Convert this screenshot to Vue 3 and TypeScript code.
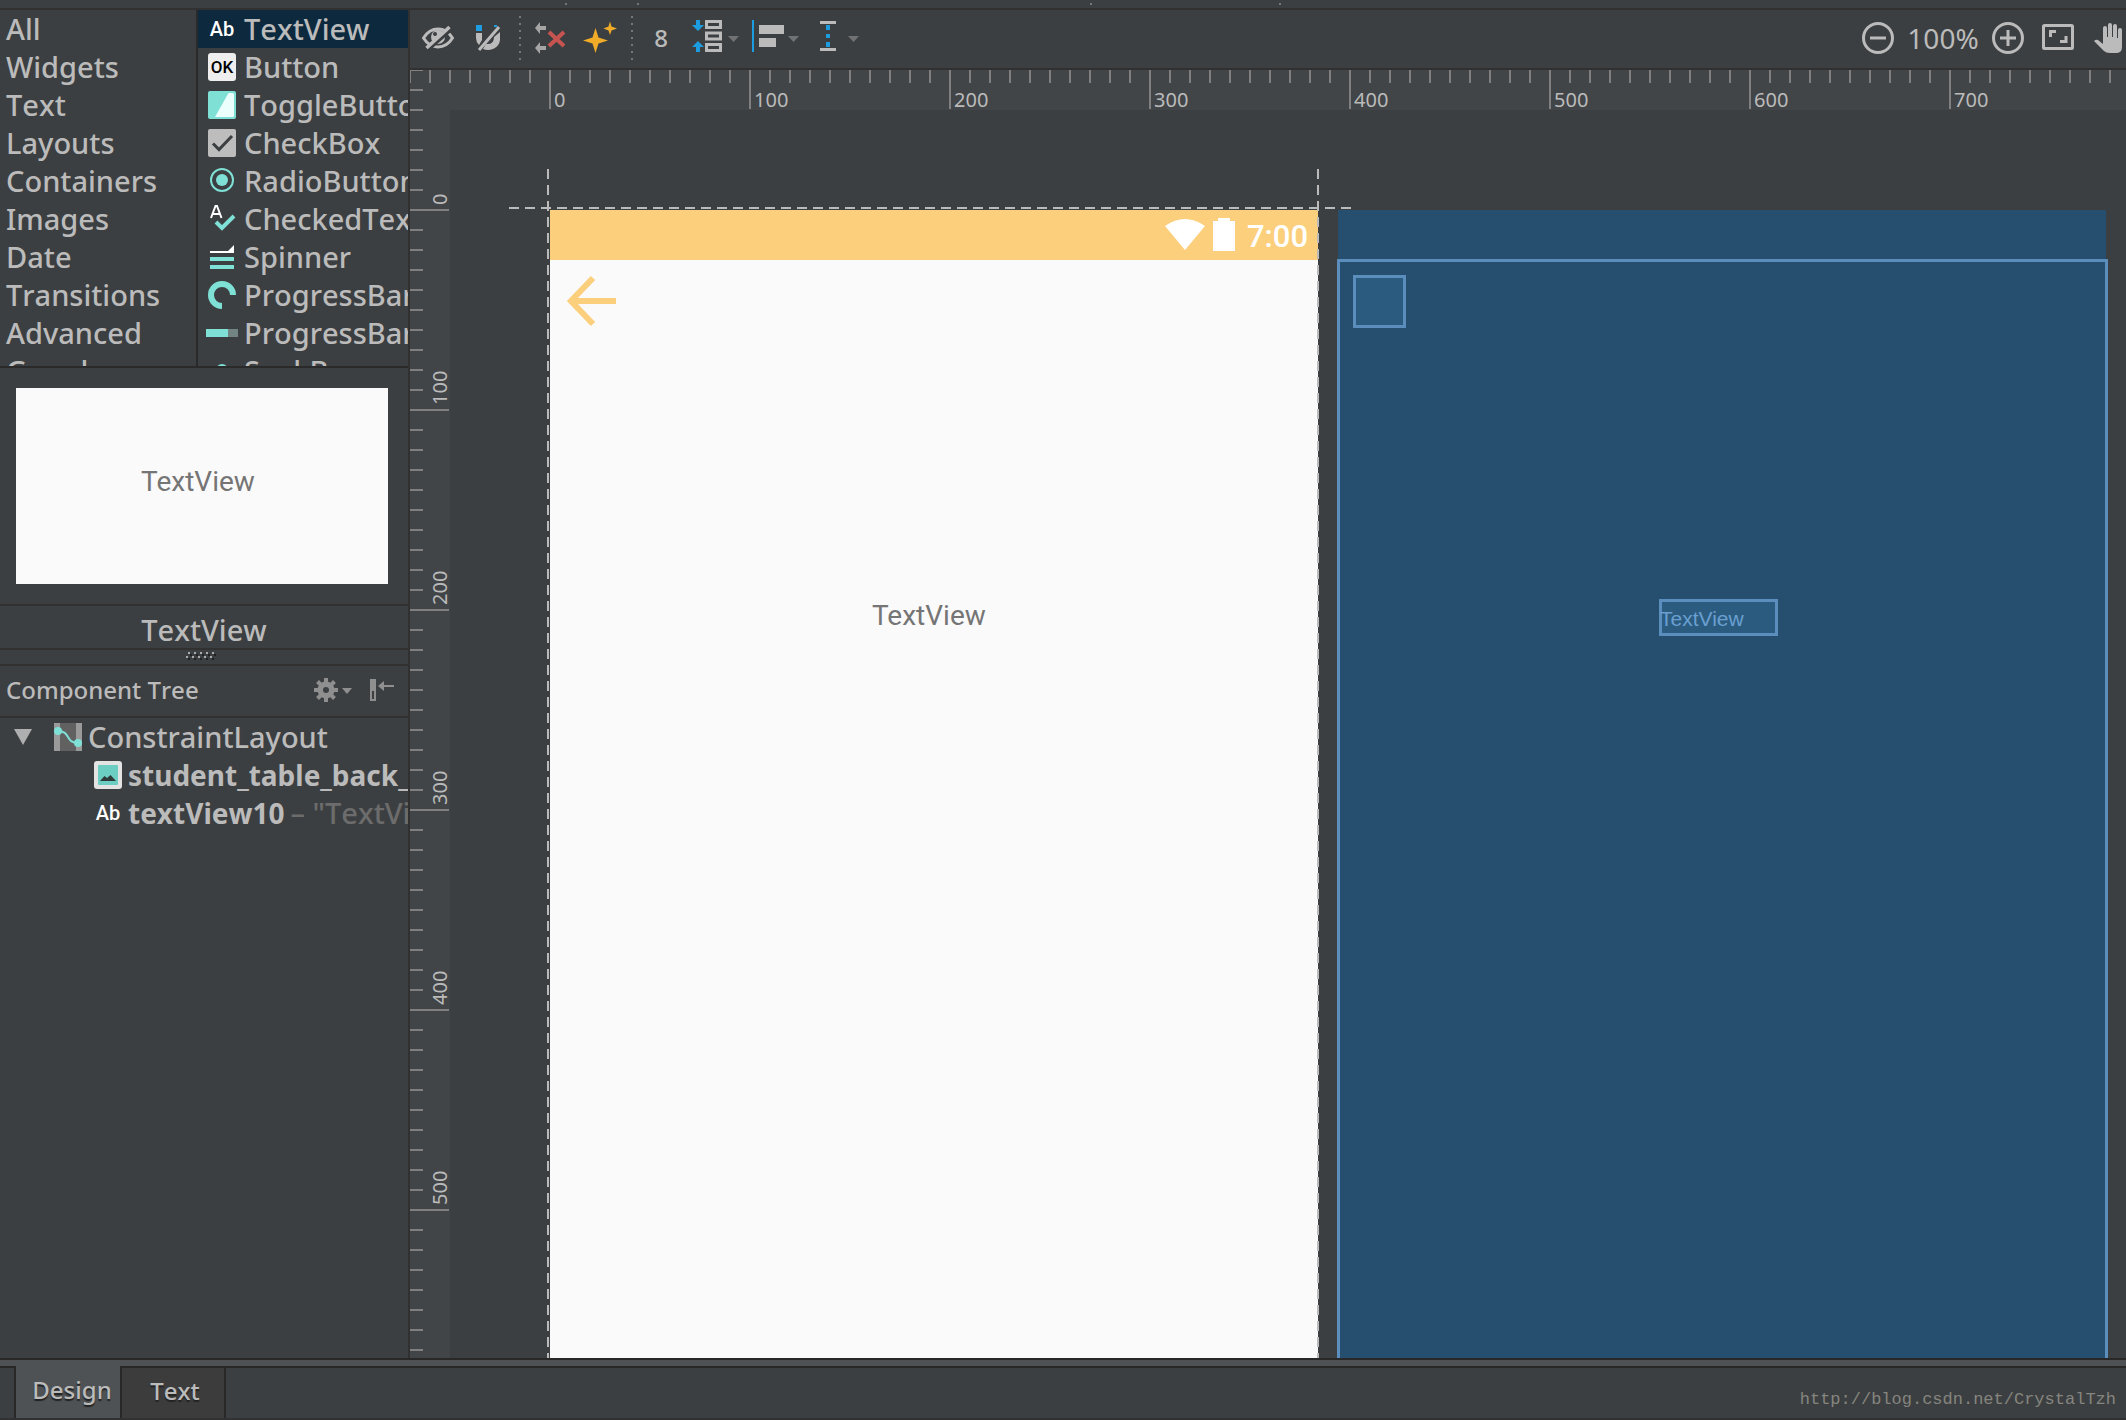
<script setup lang="ts">
import { ref } from 'vue'

const categories: string[] = [
  'All', 'Widgets', 'Text', 'Layouts', 'Containers', 'Images', 'Date', 'Transitions', 'Advanced', 'Google',
]

interface PaletteItem {
  icon: string
  label: string
}

const items: PaletteItem[] = [
  { icon: 'ab', label: 'TextView' },
  { icon: 'ok', label: 'Button' },
  { icon: 'toggle', label: 'ToggleButton' },
  { icon: 'check', label: 'CheckBox' },
  { icon: 'radio', label: 'RadioButton' },
  { icon: 'checked', label: 'CheckedTextView' },
  { icon: 'spinner', label: 'Spinner' },
  { icon: 'progress', label: 'ProgressBar' },
  { icon: 'bar', label: 'ProgressBar (Horizontal)' },
  { icon: 'seek', label: 'SeekBar' },
]

const selected = ref(0)
const tab = ref('Design')
const columns: number[] = [0, 100, 200, 300, 400, 500, 600, 700]
const rows: number[] = [0, 100, 200, 300, 400, 500]
</script>

<template>
  <div class="ide">
    <div class="strip"><i class="d1"></i><i class="d2"></i><i class="d3"></i><i class="d4"></i></div>

    <div class="body">
      <aside class="side">
        <div class="palette">
          <nav class="cats">
            <button v-for="c in categories" :key="c" type="button" class="row">{{ c }}</button>
          </nav>
          <div class="items">
            <button
              v-for="(it, i) in items" :key="it.label" type="button"
              class="row item" :class="{ sel: i === selected }" @click="selected = i"
            >
              <span v-if="it.icon === 'ab'" class="glyph ab">Ab</span>
              <span v-else-if="it.icon === 'ok'" class="glyph ok">OK</span>
              <svg v-else class="glyph" viewBox="0 0 28 28">
                <template v-if="it.icon === 'toggle'">
                  <rect width="28" height="28" rx="2" fill="#7fe0d6" />
                  <path d="M20.500 2H24.500Q26 2 26 3.500V24.500Q26 26 24.500 26H7Z" fill="#ebfffd" />
                </template>
                <template v-else-if="it.icon === 'check'">
                  <rect width="28" height="28" rx="2" fill="#bdbdbd" />
                  <path d="M5 14.500L11 20.500L24 7" fill="none" stroke="#3c3f41" stroke-width="3" />
                </template>
                <template v-else-if="it.icon === 'radio'">
                  <circle cx="14" cy="13" r="11" fill="none" stroke="#7fe0d6" stroke-width="2" />
                  <circle cx="14" cy="13" r="6" fill="#7fe0d6" />
                </template>
                <template v-else-if="it.icon === 'checked'">
                  <path d="M3 13L7.500 1H9L13.500 13M4.500 9H12" fill="none" stroke="#fff" stroke-width="2" />
                  <path d="M8 17L14 23L26 11" fill="none" stroke="#7fe0d6" stroke-width="4" />
                </template>
                <template v-else-if="it.icon === 'spinner'">
                  <path d="M2 8H20L26 2V10H2Z" fill="#fff" />
                  <path d="M2 14H26V18H2ZM2 22H26V26H2Z" fill="#7fe0d6" />
                </template>
                <path
                  v-else-if="it.icon === 'progress'" d="M14 25A11 11 0 1 1 25 14"
                  fill="none" stroke="#7fe0d6" stroke-width="6"
                />
                <template v-else-if="it.icon === 'bar'">
                  <rect x="-2" y="10" width="22" height="8" fill="#7fe0d6" />
                  <rect x="20" y="10" width="10" height="8" fill="#718482" />
                </template>
                <circle v-else cx="14" cy="13" r="6" fill="#7fe0d6" />
              </svg>
              <span>{{ it.label }}</span>
            </button>
          </div>
        </div>

        <div class="preview"><div class="sheet">TextView</div></div>
        <div class="caption">TextView</div>
        <div class="grip">
          <svg width="30" height="8" viewBox="0 0 30 8">
            <path d="M2 1H30" stroke="#aaa" stroke-width="2" stroke-dasharray="2 4" />
            <path d="M0 5H28" stroke="#aaa" stroke-width="2" stroke-dasharray="2 4" />
            <path d="M4 3H30M2 7H30" stroke="#222" stroke-width="2" stroke-dasharray="2 4" />
          </svg>
        </div>

        <header class="tree-head">
          <h2>Component Tree</h2>
          <button type="button" aria-label="Tree options">
            <svg width="40" height="28" viewBox="0 0 40 28">
              <g fill="#8f8f8f">
                <circle cx="14" cy="14" r="8.500" />
                <path d="M12 2H16V26H12ZM2 12H26V16H2Z" />
                <path d="M12 2H16V26H12ZM2 12H26V16H2Z" transform="rotate(45 14 14)" />
                <path d="M30 12H40L35 18Z" />
              </g>
              <circle cx="14" cy="14" r="3" fill="#3c3f41" />
            </svg>
          </button>
          <button type="button" aria-label="Hide panel">
            <svg width="28" height="28" viewBox="0 0 28 28">
              <path d="M2 3H8V25H2ZM4 15V23H6V15Z" fill="#8f8f8f" fill-rule="evenodd" />
              <path d="M10 10L16 5V9H26V11H16V15Z" fill="#8f8f8f" />
            </svg>
          </button>
        </header>

        <ul class="tree">
          <li class="row root">
            <svg class="arrow" width="18" height="16" viewBox="0 0 18 16"><path d="M0 0H18L9 16Z" fill="#afafaf" /></svg>
            <svg class="glyph" viewBox="0 0 28 28">
              <rect width="28" height="28" fill="#9a9a9a" /><rect x="6" width="16" height="28" fill="#616161" />
              <path d="M4 8C17 8 11 20 24 20" fill="none" stroke="#7fe0d6" stroke-width="2" />
              <circle cx="4" cy="8" r="4" fill="#7fe0d6" /><circle cx="24" cy="20" r="4" fill="#7fe0d6" />
            </svg>
            <span>ConstraintLayout</span>
          </li>
          <li class="row leaf">
            <svg class="glyph" viewBox="0 0 28 28">
              <rect width="28" height="28" rx="3" fill="#e3e3e3" /><rect x="4" y="4" width="20" height="20" rx="1" fill="#6ccdc3" />
              <path d="M6 20L10.500 15L13 17L16.500 14L22 20Z" fill="#2f3a3a" />
            </svg>
            <b>student_table_back_btn</b>
          </li>
          <li class="row leaf">
            <span class="glyph ab">Ab</span>
            <b>textView10</b><span class="hint">– "TextView"</span>
          </li>
        </ul>
      </aside>

      <main class="editor">
        <div class="toolbar">
          <button type="button" class="tool" aria-label="Show constraints">
            <svg viewBox="0 0 40 36">
              <path d="M4.500 18C12 6 26 6 33.500 18C26 30 12 30 4.500 18Z" fill="none" stroke="#bbb" stroke-width="3" />
              <circle cx="19" cy="17" r="7" fill="#bbb" /><circle cx="16" cy="14" r="2" fill="#3c3f41" />
              <path d="M9 30L33 9" stroke="#3c3f41" stroke-width="3" />
              <path d="M7.500 28L30.500 7" stroke="#bbb" stroke-width="3.500" />
            </svg>
          </button>
          <button type="button" class="tool" aria-label="Autoconnect">
            <svg viewBox="0 0 40 36">
              <path d="M7 5H13V11H7ZM25 5H28V7H25Z" fill="#1d9cdf" />
              <path d="M7 13H13V20L10 25Q7 22 7 18Z" fill="#bbb" />
              <path d="M25 17L31 12V20A12 11 0 0 1 14 29L17 24Q25 25 25 17Z" fill="#bbb" />
              <path d="M10 30L30 7" stroke="#bbb" stroke-width="3" />
            </svg>
          </button>
          <span class="sep"></span>
          <button type="button" class="tool" aria-label="Clear constraints">
            <svg viewBox="0 0 40 36">
              <path d="M4 8L9 2V6H15V10H9V14ZM4 28L9 22V26H15V30H9V34Z" fill="#a5a5a5" />
              <path d="M18 12L33 26M33 12L18 26" stroke="#c75450" stroke-width="4" />
            </svg>
          </button>
          <button type="button" class="tool" aria-label="Infer constraints">
            <svg viewBox="0 0 40 36">
              <path
                d="M14.500 8L17.500 17.500L27 20.500L17.500 23.500L14.500 33L11.500 23.500L2 20.500L11.500 17.500ZM29 1.500L30.500 6.500L36 8.500L30.500 10.500L29 15L27.500 10.500L22.500 8.500L27.500 6.500Z"
                fill="#f0ac29"
              />
            </svg>
          </button>
          <span class="sep"></span>
          <button type="button" class="margin">8</button>
          <button type="button" class="tool wide" aria-label="Pack">
            <svg viewBox="0 0 50 36">
              <path d="M7 0H11V5H15L9 11L3 5H7ZM9 21L15 27H11V32H7V27H3Z" fill="#1d9cdf" />
              <path d="M17.500 1.500H31.500V7.500H17.500ZM17.500 13H31.500V19H17.500ZM17.500 24.500H31.500V30.500H17.500Z" fill="none" stroke="#bbb" stroke-width="3" />
              <path d="M39 16H50L44.500 22Z" fill="#707274" />
            </svg>
          </button>
          <button type="button" class="tool wide" aria-label="Align">
            <svg viewBox="0 0 50 36">
              <path d="M3 0H5V32H3Z" fill="#1d9cdf" />
              <path d="M10 5H35V14H10ZM10 18H27V27H10Z" fill="#bbb" />
              <path d="M39 16H50L44.500 22Z" fill="#707274" />
            </svg>
          </button>
          <button type="button" class="tool wide" aria-label="Guidelines">
            <svg viewBox="0 0 50 36">
              <path d="M11 1H27V4H11ZM11 28H27V31H11Z" fill="#bbb" />
              <path d="M17 5H21V10H17ZM17 14H21V18H17ZM17 22H21V27H17Z" fill="#1d9cdf" />
              <path d="M39 16H50L44.500 22Z" fill="#707274" />
            </svg>
          </button>

          <div class="zoom">
            <button type="button" aria-label="Zoom out">
              <svg width="36" height="36" viewBox="0 0 36 36" fill="none" stroke="#bbb" stroke-width="3">
                <circle cx="18" cy="18" r="14.500" /><path d="M10 18H26" />
              </svg>
            </button>
            <span class="level">100%</span>
            <button type="button" aria-label="Zoom in">
              <svg width="36" height="36" viewBox="0 0 36 36" fill="none" stroke="#bbb" stroke-width="3">
                <circle cx="18" cy="18" r="14.500" /><path d="M10 18H26M18 10V26" />
              </svg>
            </button>
            <button type="button" aria-label="Zoom to fit">
              <svg width="36" height="36" viewBox="0 0 36 36" fill="none" stroke="#bbb" stroke-width="3">
                <rect x="3.500" y="5.500" width="29" height="23" rx="1" /><path d="M10.500 17V11.500H16M26 16V21.500H20" />
              </svg>
            </button>
            <button type="button" aria-label="Pan">
              <svg width="36" height="36" viewBox="0 0 36 36" fill="#bbb">
                <path d="M4 21Q6 19 8 20L13 24V8Q13 6 15 6T17 8V17H18V5Q18 3 20 3T22 5V17H23V6Q23 4 25 4T27 6V18H28V10Q28 8 30 8T32 10V27Q32 33 26 33H20Q16 33 14 31Z" />
              </svg>
            </button>
          </div>
        </div>

        <div class="surface">
          <div class="ruler top"><span v-for="n in columns" :key="n">{{ n }}</span></div>
          <div class="ruler left"><span v-for="n in rows" :key="n">{{ n }}</span></div>
          <div class="canvas">
            <section class="device">
              <div class="status">
                <svg width="40" height="32" viewBox="0 0 40 32"><path d="M0 7Q20 -7 40 7L20 31Z" fill="#fff" /></svg>
                <svg width="22" height="34" viewBox="0 0 22 34"><path d="M5 0H17V3H22V33H0V3H5Z" fill="#fff" /></svg>
                <span>7:00</span>
              </div>
              <svg class="back" width="50" height="50" viewBox="0 0 50 50">
                <path d="M27 2L5 25L27 48M5 25H50" fill="none" stroke="#fccf7c" stroke-width="6" />
              </svg>
              <span class="label">TextView</span>
            </section>
            <section class="blueprint">
              <div class="frame">
                <div class="thumb"></div>
                <div class="tv">TextView</div>
              </div>
            </section>
            <i class="dash h"></i><i class="dash v start"></i><i class="dash v end"></i>
          </div>
        </div>
      </main>
    </div>

    <footer class="tabs">
      <button
        v-for="t in ['Design', 'Text']" :key="t" type="button"
        :class="{ on: t === tab }" @click="tab = t"
      >{{ t }}</button>
      <span class="mark">http://blog.csdn.net/CrystalTzh</span>
    </footer>
  </div>
</template>

<style>
body {
  background: #3c3f41;
}
</style>

<style scoped>
* {
  box-sizing: border-box;
}
.ide {
  height: 100vh;
  display: flex;
  flex-direction: column;
  overflow: hidden;
  background: #3c3f41;
  color: #bbb;
  font: 500 29px/38px "Noto Sans", "Open Sans", sans-serif;
  font-kerning: none;
}
button {
  border: 0;
  padding: 0;
  background: none;
  color: inherit;
  font: inherit;
  font-kerning: none;
}
svg {
  display: block;
  flex: none;
  overflow: visible;
}
.strip {
  position: relative;
  flex: none;
  height: 10px;
  border-bottom: 2px solid #313131;
}
.strip i {
  position: absolute;
  top: 3px;
  width: 2px;
  height: 2px;
  background: #75787a;
}
.d1 { left: 565px; }
.d2 { left: 637px; }
.d3 { left: 1090px; }
.d4 { left: 1279px; }
.body {
  flex: 1;
  min-height: 0;
  display: flex;
}

/* side panel */
.side {
  flex: none;
  width: 410px;
  border-right: 2px solid #313131;
  overflow: hidden;
}
.palette {
  display: flex;
  height: 358px;
  border-bottom: 2px solid #2a2a2a;
  overflow: hidden;
}
.cats {
  width: 198px;
  flex: none;
  padding-left: 6px;
  border-right: 2px solid #2a2a2a;
}
.items {
  flex: 1;
  min-width: 0;
  overflow: hidden;
}
.row {
  display: flex;
  align-items: center;
  width: 100%;
  height: 38px;
  white-space: nowrap;
  text-align: left;
}
.item {
  gap: 8px;
  padding-left: 10px;
}
.sel {
  background: #0d293e;
}
.glyph {
  flex: none;
  width: 28px;
  height: 28px;
}
.ab,
.ok {
  font: 500 20px/28px Roboto, sans-serif;
  text-align: center;
  color: #fff;
}
.ok {
  border-radius: 3px;
  background: #eee;
  color: #000;
  font-size: 17px;
}
.preview {
  padding: 20px 20px 20px 16px;
  border-bottom: 2px solid #313131;
}
.sheet {
  display: flex;
  align-items: center;
  justify-content: center;
  height: 196px;
  padding: 0 8px 8px 0;
  background: #fafafa;
  color: #757575;
  font: 28px/32px Roboto, sans-serif;
}
.caption {
  height: 44px;
  padding-top: 5px;
  border-bottom: 2px solid #313131;
  text-align: center;
}
.grip {
  display: flex;
  justify-content: center;
  height: 16px;
  padding: 2px 6px 0 0;
  border-bottom: 2px solid #313131;
}
.tree-head {
  display: flex;
  align-items: center;
  height: 52px;
  gap: 16px;
  padding: 0 12px 2px 6px;
  border-bottom: 2px solid #313131;
}
.tree-head h2 {
  flex: 1;
  margin: 0;
  font-size: 24px;
  font-weight: 500;
}
.tree {
  margin: 0;
  padding: 0;
  list-style: none;
}
.root {
  padding-left: 14px;
  gap: 6px;
}
.arrow {
  margin-right: 16px;
}
.leaf {
  padding-left: 94px;
  gap: 6px;
}
.leaf b {
  font-size: 28px;
}
.hint {
  color: #6c6c6c;
}

/* editor */
.editor {
  flex: 1;
  min-width: 0;
  display: flex;
  flex-direction: column;
}
.toolbar {
  flex: none;
  display: flex;
  align-items: center;
  gap: 10px;
  height: 60px;
  padding: 0 0 2px 9px;
  border-bottom: 2px solid #313131;
}
.tool {
  flex: none;
  width: 40px;
  height: 36px;
}
.tool svg {
  width: 100%;
  height: 36px;
}
.wide {
  width: 50px;
}
.margin {
  width: 36px;
  font-size: 24px;
}
.sep {
  width: 2px;
  height: 44px;
  background: repeating-linear-gradient(#75787a 0 2px, transparent 2px 7px);
}
.zoom {
  display: flex;
  align-items: center;
  gap: 14px;
  margin-left: auto;
}
.level {
  display: flex;
  justify-content: center;
  width: 66px;
  font-size: 28px;
  font-weight: 400;
}
.surface {
  flex: 1;
  min-height: 0;
  display: grid;
  grid-template: 40px minmax(0, 1fr) / 40px minmax(0, 1fr);
}
.ruler {
  display: flex;
  overflow: hidden;
  background-color: #424547;
  font-size: 20px;
  font-weight: 400;
  line-height: 24px;
}
.ruler span {
  flex: none;
}
.top {
  grid-area: 1 / 1 / 2 / 3;
  padding: 18px 0 0 144px;
  background-image: linear-gradient(to right, #808080 2px, transparent 2px), linear-gradient(to right, #808080 2px, transparent 2px);
  background-size: 20px 13px, 200px 39px;
  background-position: -1px 0, 139px 0;
  background-repeat: repeat-x;
}
.top span {
  width: 200px;
}
.left {
  grid-area: 1 / 1 / 3 / 2;
  flex-direction: column;
  padding-left: 18px;
  background-color: transparent;
  background-image: linear-gradient(#808080 2px, transparent 2px), linear-gradient(#808080 2px, transparent 2px), linear-gradient(#424547, #424547);
  background-size: 13px 20px, 39px 200px, 100% 100%;
  background-position: 0 -1px, 0 139px, 0 40px;
  background-repeat: repeat-y, repeat-y, no-repeat;
}
.left span {
  width: 24px;
  height: 200px;
  writing-mode: vertical-rl;
  transform: rotate(180deg);
}
.left span:first-child {
  height: 135px;
}
.canvas {
  grid-area: 2 / 2;
  position: relative;
  overflow: hidden;
}
.device,
.blueprint {
  position: absolute;
  top: 100px;
  bottom: 0;
  width: 768px;
}
.device {
  left: 100px;
  background: #fafafa;
}
.status {
  display: flex;
  align-items: center;
  justify-content: flex-end;
  gap: 8px;
  height: 50px;
  padding-right: 10px;
  background: #fccf7c;
  color: #fff;
  font: 500 31px/36px Roboto, sans-serif;
}
.status span {
  padding: 4px 0 0 4px;
}
.back {
  position: absolute;
  left: 16px;
  top: 66px;
}
.label {
  position: absolute;
  left: 322px;
  top: 390px;
  color: #757575;
  font: 28px/32px Roboto, sans-serif;
}
.blueprint {
  left: 888px;
  padding-top: 49px;
  background: #264e6e;
}
.frame {
  position: relative;
  height: 100%;
  margin: 0 -2px 0 -1px;
  border: 3px solid #5b8dbd;
  border-bottom: 0;
}
.thumb,
.tv {
  position: absolute;
  border: 3px solid #5b8dbd;
  background: #2b5c80;
}
.thumb {
  left: 13px;
  top: 13px;
  width: 53px;
  height: 53px;
}
.tv {
  left: 319px;
  top: 337px;
  width: 119px;
  height: 37px;
  color: #6a9fd0;
  text-indent: -2px;
  font: 21px/34px "Liberation Sans", Arial, sans-serif;
}
.dash {
  position: absolute;
}
.h {
  left: 59px;
  top: 97px;
  width: 842px;
  height: 2px;
  background: repeating-linear-gradient(to right, #bbb 0 10px, transparent 10px 16px);
}
.v {
  top: 59px;
  bottom: 0;
  width: 2px;
  background: repeating-linear-gradient(#bbb 0 10px, transparent 10px 16px);
}
.start { left: 97px; }
.end { left: 867px; }

/* bottom tabs */
.tabs {
  flex: none;
  display: flex;
  height: 62px;
  padding-left: 14px;
  border-top: 2px solid #282828;
  border-bottom: 2px solid #313131;
  background: linear-gradient(#4e5254 6px, #282828 6px 8px, transparent 8px);
  font-size: 24px;
}
.tabs button {
  width: 104px;
  margin-top: 6px;
  padding: 0 0 4px 4px;
  border: solid #282828;
  border-width: 2px 2px 0 0;
  background: #3c3c3c;
  text-shadow: 0 2px 1px #222;
}
.tabs button.on {
  width: 108px;
  padding-left: 8px;
  border-width: 0 2px;
  background: #4e5254;
}
.mark {
  margin: 28px 10px 0 auto;
  color: #85857f;
  font: 17px/24px "Liberation Mono", monospace;
}
</style>
